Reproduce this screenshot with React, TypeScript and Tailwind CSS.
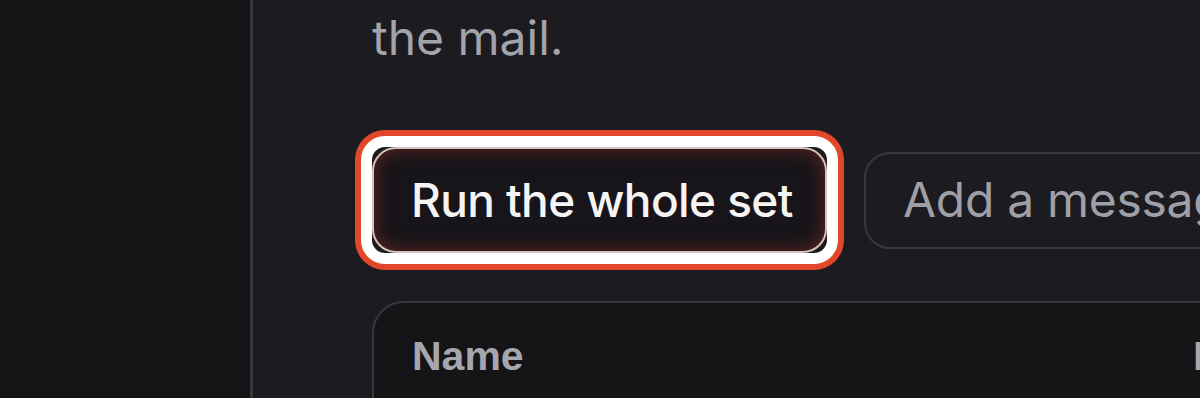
import React from "react";

const Sidebar = () => (
  <aside className="w-[253px] shrink-0 bg-[#141416] border-r-[3px] border-[#37363b]" />
);

const RunButton = () => (
  // highlight annotation around the primary action
  <div className="shrink-0 rounded-[24px] border-[11px] border-white bg-[#1c1b20] shadow-[0_0_0_6px_#e1472b]">
    <button className="block h-[106px] w-[455px] whitespace-nowrap rounded-[24px] border-2 border-[#d8c2bc] bg-[#18151a] pl-[37px] text-left text-[46px] font-medium tracking-[-0.6px] text-[#f6f4f3] shadow-[inset_0_0_18px_rgba(150,55,40,0.55)]">
      Run the whole set
    </button>
  </div>
);

const App = () => {
  return (
    <div
      className="flex h-[398px] w-[1200px] overflow-hidden bg-[#1c1b20]"
      style={{ fontFamily: "Inter, 'Noto Sans', sans-serif" }}
    >
      <Sidebar />

      <main className="flex min-w-0 flex-1 flex-col pl-[119px]">
        <p className="pt-[2px] text-[48px] leading-[72px] text-[#a3a3ab]">the mail.</p>

        <div className="mt-[62px] flex items-center gap-[26px] -ml-[11px]">
          <RunButton />
          <div className="flex h-[97px] w-[600px] shrink-0 items-center rounded-[26px] border-2 border-[#39383e] pl-[37px]">
            <span className="whitespace-nowrap text-[48px] tracking-[-0.3px] text-[#9f9fa8]">Add a message for your team</span>
          </div>
        </div>

        <div className="mt-[37px] h-[200px] w-[1000px] shrink-0 rounded-[32px] border-2 border-[#38373d] bg-[#151417]">
          <div
            className="flex pl-[38px] pt-[23px] text-[41px] font-bold text-[#a6a6ae]"
            style={{ fontFamily: "'Liberation Sans', Arial, sans-serif" }}
          >
            <span className="w-[781px]">Name</span>
            <span>Role</span>
          </div>
        </div>
      </main>
    </div>
  );
};

export default App;
